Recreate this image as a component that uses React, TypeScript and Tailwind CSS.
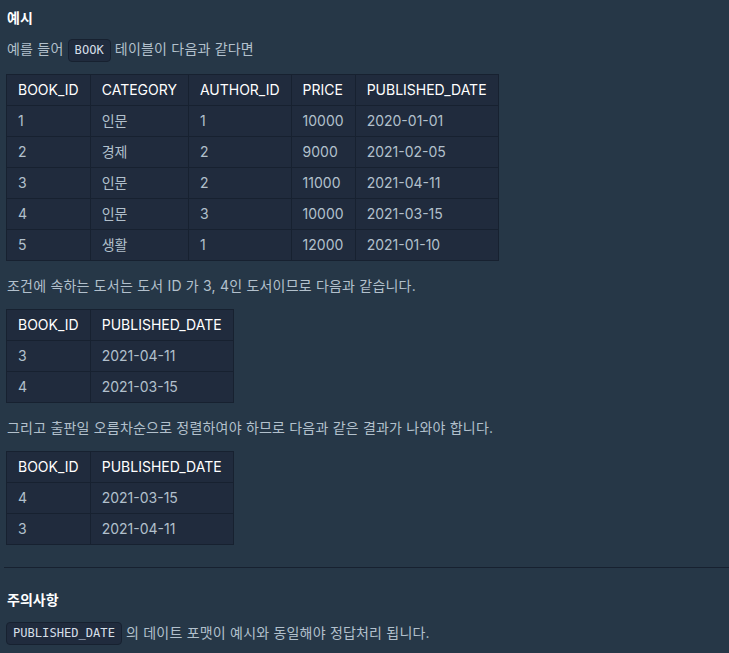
import React from 'react';

const font = { fontFamily: 'Inter, "Noto Sans CJK KR", sans-serif' };

type Row = (string | number)[];

const Code: React.FC<{ children: React.ReactNode }> = ({ children }) => (
  <code className="inline-block rounded-[4px] border border-[#172130] bg-[#202b3d] px-[6px] py-[2px] align-middle font-['DejaVu_Sans_Mono',monospace] text-[12.1px] leading-[17px] tracking-normal text-[#d5dee7]">
    {children}
  </code>
);

const Table: React.FC<{ head: string[]; rows: Row[]; className?: string }> = ({ head, rows, className }) => (
  <table className={'border-collapse bg-[#202b3d] text-[14px] leading-[20px] ' + (className ?? '')}>
    <thead>
      <tr>
        {head.map((h) => (
          <th key={h} className="border border-[#172130] px-[11px] py-[5px] text-left font-normal text-white">
            {h}
          </th>
        ))}
      </tr>
    </thead>
    <tbody>
      {rows.map((r, i) => (
        <tr key={i}>
          {r.map((c, j) => (
            <td key={j} className="border border-[#172130] px-[11px] py-[5px] text-[#b2c0cc]">
              {c}
            </td>
          ))}
        </tr>
      ))}
    </tbody>
  </table>
);

export default function App() {
  return (
    <div className="min-h-screen bg-[#263747] px-[6px] pt-[7px] text-[14px] text-[#b2c0cc]" style={font}>
      <h5 className="pl-px text-[14px] font-bold leading-[22px] text-white">예시</h5>
      <p className="mt-[8px] pl-px leading-[24px] tracking-[0.2px]">
        예를 들어 <Code>BOOK</Code> 테이블이 다음과 같다면
      </p>
      <Table
        className="mt-[12px]"
        head={['BOOK_ID', 'CATEGORY', 'AUTHOR_ID', 'PRICE', 'PUBLISHED_DATE']}
        rows={[
          [1, '인문', 1, 10000, '2020-01-01'],
          [2, '경제', 2, 9000, '2021-02-05'],
          [3, '인문', 2, 11000, '2021-04-11'],
          [4, '인문', 3, 10000, '2021-03-15'],
          [5, '생활', 1, 12000, '2021-01-10'],
        ]}
      />
      <p className="mt-[14px] pl-px leading-[22px] tracking-[0.2px]">
        조건에 속하는 도서는 도서 ID 가 3, 4인 도서이므로 다음과 같습니다.
      </p>
      <Table
        className="mt-[12px]"
        head={['BOOK_ID', 'PUBLISHED_DATE']}
        rows={[
          [3, '2021-04-11'],
          [4, '2021-03-15'],
        ]}
      />
      <p className="mt-[14px] pl-px leading-[22px] tracking-[0.2px]">
        그리고 출판일 오름차순으로 정렬하여야 하므로 다음과 같은 결과가 나와야 합니다.
      </p>
      <Table
        className="mt-[12px]"
        head={['BOOK_ID', 'PUBLISHED_DATE']}
        rows={[
          [4, '2021-03-15'],
          [3, '2021-04-11'],
        ]}
      />
      <hr className="-mr-[6px] ml-[-2px] mt-[22px] border-t border-[#172130]" />
      <h5 className="mt-[21px] pl-px text-[14px] font-bold leading-[22px] text-white">주의사항</h5>
      <p className="mt-[10px] leading-[24px] tracking-[0.2px]">
        <Code>PUBLISHED_DATE</Code> 의 데이트 포맷이 예시와 동일해야 정답처리 됩니다.
      </p>
    </div>
  );
}
